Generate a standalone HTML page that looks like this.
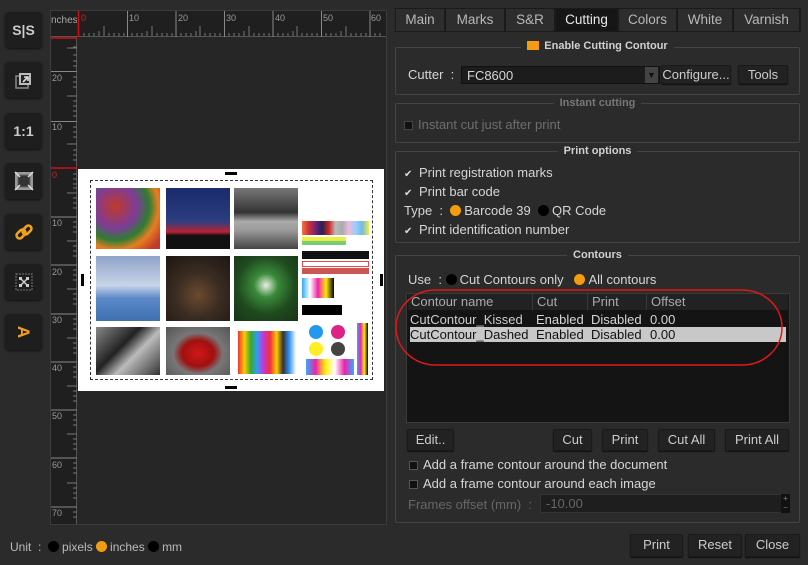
<!DOCTYPE html>
<html><head><meta charset="utf-8"><style>
*{box-sizing:border-box;margin:0;padding:0}
body{width:808px;height:565px;background:#2b2b2b;font-family:"Liberation Sans",sans-serif;font-size:13px;color:#d6d6d6;position:relative;overflow:hidden}
.a{position:absolute}
.tb{position:absolute;left:5px;width:37px;height:36px;background:#1e1e1e;border-radius:4px;box-shadow:0 1px 2px #111;display:flex;align-items:center;justify-content:center;color:#ccc;font-weight:bold;font-size:14px}
.tab{position:absolute;top:9px;height:22px;background:#2d2d2d;border-right:1px solid #1a1a1a;text-align:center;line-height:22px;color:#b8b8b8;font-size:13.5px}
.grp{position:absolute;left:395px;width:405px;border:1px solid #444;border-radius:2px;background:#2b2b2b}
.gt{position:absolute;left:0;right:0;text-align:center;font-size:11px;color:#d0d0d0;font-weight:bold}
.gt span{background:#2b2b2b;padding:0 6px}
.btn{position:absolute;height:22px;background:#222;border:1px solid #1a1a1a;border-radius:2px;text-align:center;line-height:20px;color:#ccc;font-size:13px;box-shadow:0 1px 1px #111}
.cb{display:inline-block;width:9px;height:9px;background:#111;border:1px solid #555;vertical-align:-1px;margin-right:5px}
.ck{display:inline-block;width:9px;height:9px;font-size:10px;line-height:9px;color:#ddd;margin-right:6px}
.rad{display:inline-block;width:11px;height:11px;border-radius:50%;background:#000;vertical-align:-1px;margin-right:3px}
.ro{background:#f39c12}
.photo{position:absolute}
</style></head><body>

<div class="tb" style="top:12px">S|S</div>
<div class="tb" style="top:62px"><svg width="22" height="22" viewBox="0 0 22 22"><rect x="3" y="7" width="12" height="12" fill="none" stroke="#888" stroke-width="1.5"/><rect x="6" y="4" width="12" height="12" fill="#bbb"/><rect x="8" y="6" width="8" height="8" fill="#222"/><path d="M10 13 L15 8 M11 8 H15 V12" stroke="#ddd" stroke-width="1.6" fill="none"/></svg></div>
<div class="tb" style="top:113px">1:1</div>
<div class="tb" style="top:163px"><svg width="22" height="22"><rect x="2" y="2" width="18" height="18" fill="#999"/><rect x="5" y="5" width="12" height="12" fill="#333" stroke="#666"/><path d="M2 2L7 7M20 2L15 7M2 20L7 15M20 20L15 15" stroke="#ddd" stroke-width="1.5"/></svg></div>
<div class="tb" style="top:214px"><svg width="22" height="22"><g fill="none" stroke="#f0a020" stroke-width="2.6"><rect x="3" y="10" width="10" height="6" rx="3" transform="rotate(-45 8 13)"/><rect x="9" y="6" width="10" height="6" rx="3" transform="rotate(-45 14 9)"/></g></svg></div>
<div class="tb" style="top:264px"><svg width="22" height="22"><rect x="3" y="3" width="16" height="16" fill="none" stroke="#777" stroke-dasharray="2 1"/><path d="M6 6h3v3H6zM13 6h3v3h-3zM6 13h3v3H6zM13 13h3v3h-3z" fill="#ccc"/><path d="M8 8L14 14M14 8L8 14" stroke="#ccc" stroke-width="1.5"/></svg></div>
<div class="tb" style="top:314px;color:#f0a020;font-size:17px"><span style="display:inline-block;transform:rotate(90deg)">A</span></div>

<div class="a" style="left:50px;top:10px;width:337px;height:515px;background:#262626;border:1px solid #3c3c3c"></div>
<div class="a" style="left:51px;top:11px;width:335px;height:26px;background:#1f1f1f;border-bottom:1px solid #555"></div>
<div class="a" style="left:51px;top:37px;width:26px;height:487px;background:#1f1f1f;border-right:1px solid #555"></div>
<div class="a" style="left:51px;top:15px;font-size:10px;color:#aaa;width:26px;overflow:hidden;white-space:nowrap">nches</div>
<svg class="a" style="left:0;top:0" width="808" height="565">
<g stroke="#888" stroke-width="1">
<line x1="127.5" y1="11" x2="127.5" y2="37"/><line x1="176" y1="11" x2="176" y2="37"/><line x1="224.5" y1="11" x2="224.5" y2="37"/><line x1="273" y1="11" x2="273" y2="37"/><line x1="321.5" y1="11" x2="321.5" y2="37"/><line x1="370" y1="11" x2="370" y2="37"/>
<line x1="51" y1="71.5" x2="77" y2="71.5"/><line x1="51" y1="121.5" x2="77" y2="121.5"/><line x1="51" y1="217" x2="77" y2="217"/><line x1="51" y1="265" x2="77" y2="265"/><line x1="51" y1="314" x2="77" y2="314"/><line x1="51" y1="362" x2="77" y2="362"/><line x1="51" y1="410" x2="77" y2="410"/><line x1="51" y1="458" x2="77" y2="458"/><line x1="51" y1="507" x2="77" y2="507"/>
</g>
<g stroke="#777">
<path d="M84 33v3M89 33v3M94 33v3M99 31v5M104 26v10M109 33v3M114 33v3M119 33v3M124 33v3M132 33v3M137 33v3M142 33v3M147 31v5M152 26v10M157 33v3M162 33v3M167 33v3M172 33v3M181 33v3M186 33v3M191 33v3M196 31v5M200 26v10M205 33v3M210 33v3M215 33v3M220 33v3M229 33v3M234 33v3M239 33v3M244 31v5M249 26v10M254 33v3M259 33v3M264 33v3M269 33v3M278 33v3M283 33v3M288 33v3M293 31v5M297 26v10M302 33v3M307 33v3M312 33v3M317 33v3M326 33v3M331 33v3M336 33v3M341 31v5M346 26v10M351 33v3M356 33v3M361 33v3M366 33v3M375 33v3M380 33v3"/>
<path d="M73 47h4M67 48h10M73 55h4M73 61h4M73 66h4M73 77h4M73 82h4M73 87h4M67 96h10M73 101h4M73 106h4M73 111h4M73 116h4M73 127h4M73 132h4M73 137h4M67 144h10M73 150h4M73 155h4M73 160h4M73 174h4M73 179h4M73 184h4M73 188h4M67 193h10M73 198h4M73 203h4M73 208h4M73 222h4M73 227h4M73 232h4M67 241h10M73 246h4M73 251h4M73 256h4M73 270h4M73 275h4M73 280h4M67 289h10M73 294h4M73 299h4M73 304h4M73 319h4M73 324h4M73 329h4M67 338h10M73 343h4M73 348h4M73 353h4M73 367h4M73 372h4M73 377h4M67 386h10M73 391h4M73 396h4M73 401h4M73 415h4M73 420h4M73 425h4M67 434h10M73 439h4M73 444h4M73 449h4M73 463h4M73 468h4M73 473h4M67 483h10M73 488h4M73 493h4M73 498h4M73 512h4M73 517h4"/>
</g>
<line x1="78.5" y1="11" x2="78.5" y2="37" stroke="#d01010" stroke-width="1.5"/>
<line x1="51" y1="38" x2="77" y2="38" stroke="#d01010" stroke-width="1.5"/>
<line x1="51" y1="168" x2="77" y2="168" stroke="#d01010" stroke-width="1.5"/>
<g fill="#999" font-size="9" font-family="Liberation Sans">
<text x="81" y="21" fill="#d02020">0</text><text x="129" y="21">10</text><text x="178" y="21">20</text><text x="226" y="21">30</text><text x="275" y="21">40</text><text x="323" y="21">50</text><text x="371" y="21">60</text>
<text x="52" y="81">20</text><text x="52" y="130">10</text><text x="52" y="178" fill="#d02020">0</text><text x="52" y="226">10</text><text x="52" y="275">20</text><text x="52" y="323">30</text><text x="52" y="371">40</text><text x="52" y="419">50</text><text x="52" y="468">60</text><text x="52" y="516">70</text>
</g>
</svg>

<div class="a" style="left:78px;top:169px;width:306px;height:222px;background:#fff"></div>
<div class="a" style="left:90px;top:180px;width:283px;height:200px;border:1.5px dashed #333"></div>
<div class="a" style="left:225px;top:172px;width:12px;height:3px;background:#000"></div>
<div class="a" style="left:225px;top:386px;width:12px;height:3px;background:#000"></div>
<div class="a" style="left:81px;top:274px;width:3px;height:12px;background:#000"></div>
<div class="a" style="left:380px;top:274px;width:3px;height:12px;background:#000"></div>
<div class="photo" style="left:96px;top:188px;width:64px;height:61px;background:radial-gradient(circle at 30% 30%,#c0392b,#7d3c98 35%,#2e7d32 55%,#e67e22 70%,#c0392b 90%)"></div>
<div class="photo" style="left:166px;top:188px;width:64px;height:61px;background:linear-gradient(#1a2a6c,#2c3e80 55%,#b23 72%,#111 78%)"></div>
<div class="photo" style="left:234px;top:188px;width:64px;height:61px;background:linear-gradient(#777,#333 40%,#aaa 55%,#999 70%,#444)"></div>
<div class="photo" style="left:96px;top:256px;width:64px;height:65px;background:linear-gradient(#8fa3c9,#c8d4e8 45%,#5b88c8 65%,#3f70b0)"></div>
<div class="photo" style="left:166px;top:256px;width:64px;height:65px;background:radial-gradient(circle at 50% 60%,#6b4a2e,#3a2c22 45%,#1c1612)"></div>
<div class="photo" style="left:234px;top:256px;width:64px;height:65px;background:radial-gradient(circle at 50% 45%,#e8f0e0,#3a8a3a 25%,#1f4a1f 60%,#173417)"></div>
<div class="photo" style="left:96px;top:327px;width:64px;height:48px;background:linear-gradient(135deg,#888,#222 40%,#bbb 60%,#333)"></div>
<div class="photo" style="left:166px;top:327px;width:64px;height:48px;background:radial-gradient(ellipse at 50% 55%,#d01818,#a01010 35%,#777 55%,#555)"></div>
<div class="photo" style="left:238px;top:331px;width:58px;height:43px;background:linear-gradient(90deg,#e33,#fc0,#3a3,#39f,#c3c,#e33,#fc0,#333,#39f,#fff)"></div>
<div class="photo" style="left:302px;top:221px;width:67px;height:14px;background:linear-gradient(90deg,#e74,#c33,#727,#225,#c22,#bbb,#aaa,#ebd,#9cf,#7bd,#ee4)"></div>
<div class="photo" style="left:302px;top:237px;width:44px;height:8px;background:linear-gradient(#ee4,#ee4 45%,#7c7 55%,#7c7)"></div>
<div class="photo" style="left:302px;top:251px;width:67px;height:8px;background:#111"></div>
<div class="photo" style="left:302px;top:261px;width:67px;height:6px;border:1px solid #e44"></div>
<div class="photo" style="left:302px;top:268px;width:67px;height:6px;background:#c55"></div>
<div class="photo" style="left:302px;top:278px;width:32px;height:20px;background:linear-gradient(90deg,#3af,#fff,#e2a,#fe0,#000)"></div>
<div class="photo" style="left:302px;top:305px;width:40px;height:10px;background:#000"></div>
<div class="photo" style="left:309px;top:325px;width:14px;height:14px;border-radius:50%;background:#29e"></div>
<div class="photo" style="left:331px;top:325px;width:14px;height:14px;border-radius:50%;background:#d28"></div>
<div class="photo" style="left:309px;top:342px;width:14px;height:14px;border-radius:50%;background:#fe2"></div>
<div class="photo" style="left:331px;top:342px;width:14px;height:14px;border-radius:50%;background:#444"></div>
<div class="photo" style="left:357px;top:323px;width:11px;height:52px;background:linear-gradient(90deg,#3af,#e2a,#fe0,#000)"></div>
<div class="photo" style="left:306px;top:359px;width:48px;height:16px;background:linear-gradient(90deg,#3af,#e2a,#fe0,#fff,#e2a,#3af)"></div>

<div class="a" style="left:395px;top:8px;width:406px;height:24px;background:#1a1a1a"></div>
<div class="tab" style="left:396px;width:49px">Main</div>
<div class="tab" style="left:446px;width:59px">Marks</div>
<div class="tab" style="left:506px;width:49px">S&amp;R</div>
<div class="tab" style="left:556px;width:62px;background:#161616;color:#e8e8e8">Cutting</div>
<div class="tab" style="left:619px;width:58px">Colors</div>
<div class="tab" style="left:678px;width:55px">White</div>
<div class="tab" style="left:734px;width:66px">Varnish</div>

<div class="grp" style="top:47px;height:48px"></div>
<div class="gt" style="left:395px;width:405px;top:40px"><span><span style="display:inline-block;width:9px;height:9px;background:#f39c12;vertical-align:-1px;margin-right:5px"></span>Enable Cutting Contour</span></div>
<div class="a" style="left:408px;top:67px">Cutter &nbsp;:</div>
<div class="a" style="left:461px;top:66px;width:199px;height:18px;background:#1c1c1c;border:1px solid #111;padding:1px 5px">FC8600</div>
<div class="a" style="left:645px;top:67px;width:13px;height:16px;background:#444;color:#111;font-size:9px;text-align:center;line-height:16px">▼</div>
<div class="btn" style="left:661px;top:65px;width:70px;height:19px;line-height:17px">Configure...</div>
<div class="btn" style="left:738px;top:65px;width:50px;height:19px;line-height:17px">Tools</div>

<div class="grp" style="top:103px;height:40px"></div>
<div class="gt" style="left:395px;width:405px;top:97px;color:#777"><span>Instant cutting</span></div>
<div class="a" style="left:404px;top:117px;color:#6e6e6e"><span class="cb" style="border-color:#444"></span>Instant cut just after print</div>

<div class="grp" style="top:151px;height:92px"></div>
<div class="gt" style="left:395px;width:405px;top:145px"><span>Print options</span></div>
<div class="a" style="left:404px;top:165px"><span class="ck">✔</span>Print registration marks</div>
<div class="a" style="left:404px;top:184px"><span class="ck">✔</span>Print bar code</div>
<div class="a" style="left:404px;top:203px">Type &nbsp;: &nbsp;<span class="rad ro"></span>Barcode 39 &nbsp;<span class="rad"></span>QR Code</div>
<div class="a" style="left:404px;top:222px"><span class="ck">✔</span>Print identification number</div>

<div class="grp" style="top:255px;height:268px"></div>
<div class="gt" style="left:395px;width:405px;top:249px"><span>Contours</span></div>
<div class="a" style="left:408px;top:272px">Use &nbsp;: <span class="rad"></span>Cut Contours only &nbsp; <span class="rad ro"></span>All contours</div>
<div class="a" style="left:406px;top:293px;width:384px;height:130px;background:#141414;border:1px solid #3a3a3a"></div>
<div class="a" style="left:408px;top:294px;width:380px;height:16px;background:#222"></div>
<div class="a" style="left:408px;top:294px;width:125px;height:16px;border-right:1px solid #3a3a3a;padding-left:3px;line-height:16px;color:#aaa">Contour name</div>
<div class="a" style="left:533px;top:294px;width:55px;height:16px;border-right:1px solid #3a3a3a;padding-left:4px;line-height:16px;color:#aaa">Cut</div>
<div class="a" style="left:588px;top:294px;width:59px;height:16px;border-right:1px solid #3a3a3a;padding-left:4px;line-height:16px;color:#aaa">Print</div>
<div class="a" style="left:647px;top:294px;padding-left:4px;line-height:16px;color:#aaa">Offset</div>
<div class="a" style="left:410px;top:312px;line-height:15px;white-space:pre;color:#ccc">CutContour_Kissed</div>
<div class="a" style="left:536px;top:312px;line-height:15px">Enabled</div>
<div class="a" style="left:591px;top:312px;line-height:15px">Disabled</div>
<div class="a" style="left:650px;top:312px;line-height:15px">0.00</div>
<div class="a" style="left:410px;top:327px;width:376px;height:15px;background:#c8c8c8"></div>
<div class="a" style="left:410px;top:327px;line-height:15px;color:#111">CutContour_Dashed</div>
<div class="a" style="left:536px;top:327px;line-height:15px;color:#111">Enabled</div>
<div class="a" style="left:591px;top:327px;line-height:15px;color:#111">Disabled</div>
<div class="a" style="left:650px;top:327px;line-height:15px;color:#111">0.00</div>
<svg class="a" style="left:0;top:0" width="808" height="565"><rect x="396" y="290" width="386" height="75" rx="40" ry="37" fill="none" stroke="#e01818" stroke-width="1.5"/></svg>

<div class="btn" style="left:407px;top:429px;width:47px">Edit..</div>
<div class="btn" style="left:553px;top:429px;width:39px">Cut</div>
<div class="btn" style="left:602px;top:429px;width:46px">Print</div>
<div class="btn" style="left:658px;top:429px;width:57px">Cut All</div>
<div class="btn" style="left:725px;top:429px;width:64px">Print All</div>
<div class="a" style="left:409px;top:457px"><span class="cb"></span>Add a frame contour around the document</div>
<div class="a" style="left:409px;top:476px"><span class="cb"></span>Add a frame contour around each image</div>
<div class="a" style="left:408px;top:497px;color:#666">Frames offset (mm) &nbsp;:</div>
<div class="a" style="left:540px;top:494px;width:250px;height:19px;background:#1e1e1e;border:1px solid #333;color:#666;padding:1px 5px">-10.00</div>
<div class="a" style="left:781px;top:494px;width:9px;height:19px;background:#111;color:#888;font-size:8px;text-align:center;line-height:9px">+<br>−</div>

<div class="btn" style="left:630px;top:534px;width:53px;height:23px">Print</div>
<div class="btn" style="left:688px;top:534px;width:54px;height:23px">Reset</div>
<div class="btn" style="left:745px;top:534px;width:55px;height:23px">Close</div>
<div class="a" style="left:10px;top:540px;font-size:12px;color:#bbb">Unit &nbsp;: &nbsp;<span class="rad"></span>pixels <span class="rad ro"></span>inches <span class="rad"></span>mm</div>
</body></html>
